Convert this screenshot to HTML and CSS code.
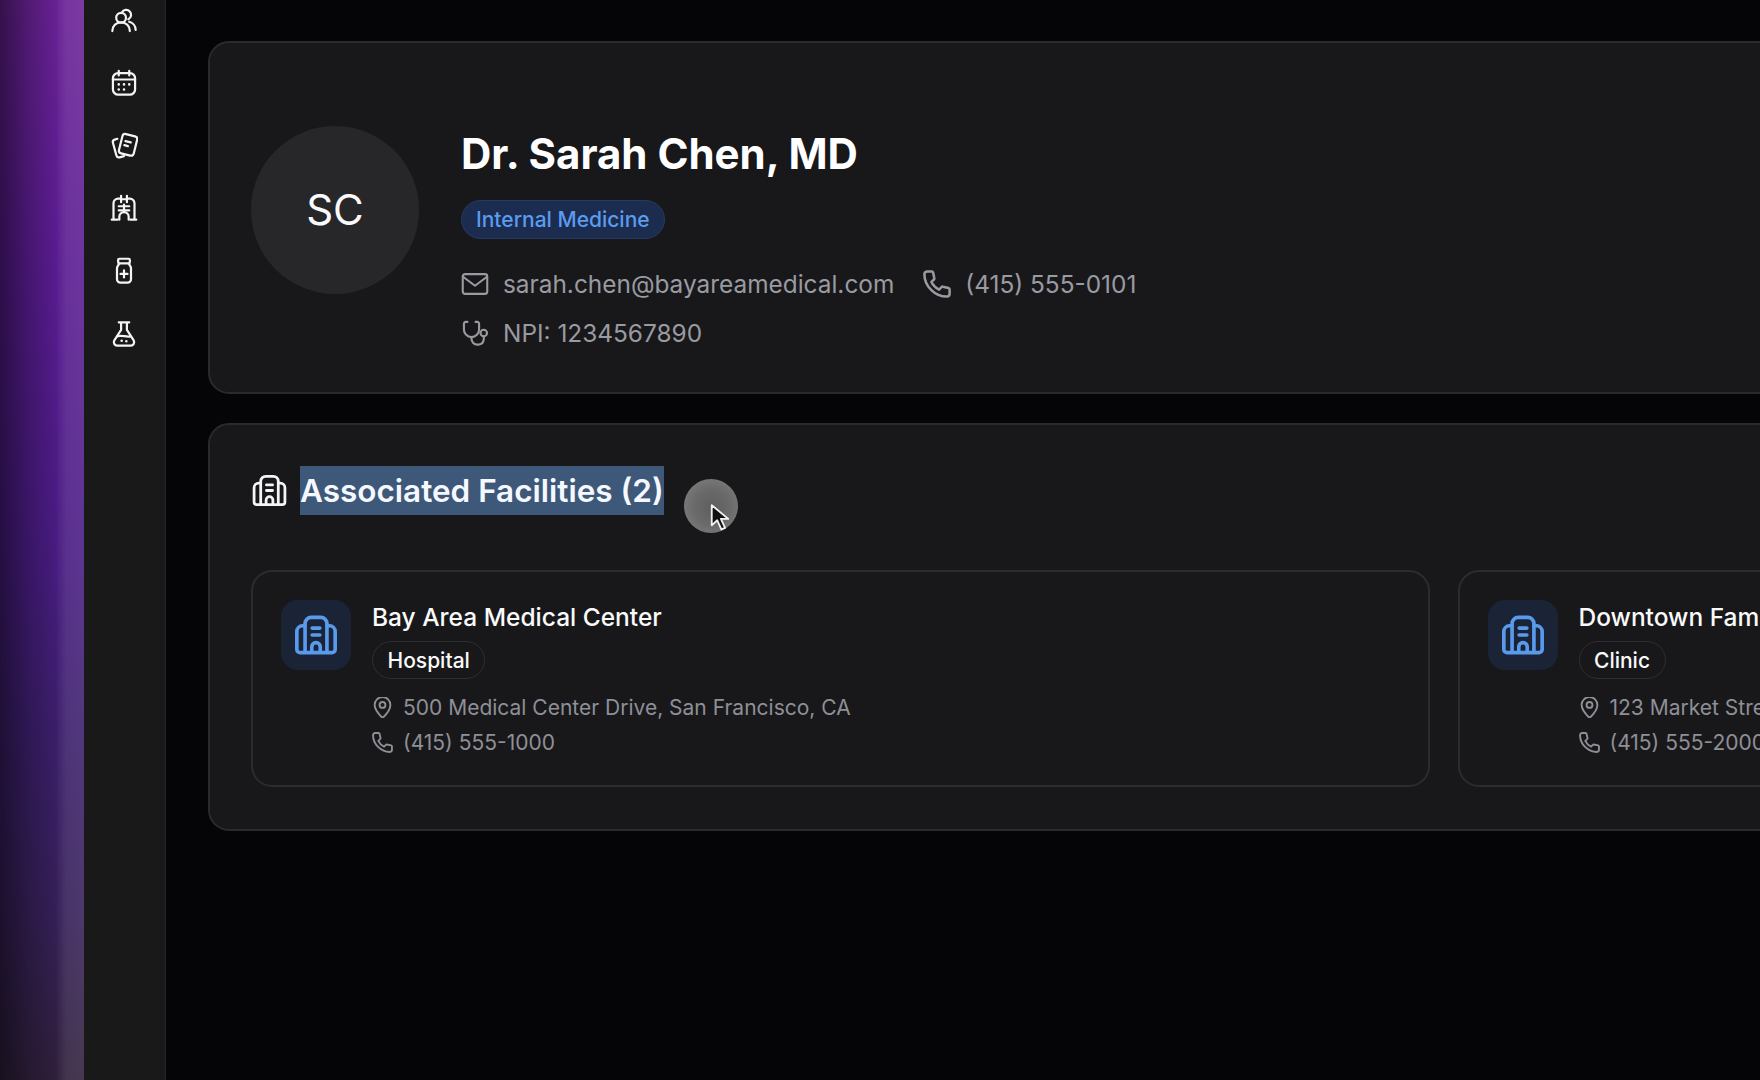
FILE: index.html
```html
<!DOCTYPE html>
<html lang="en">
<head>
<meta charset="utf-8">
<title>Dr. Sarah Chen</title>
<link rel="stylesheet" href="styles.css">
</head>
<body>
<svg class="defs" width="0" height="0" aria-hidden="true">
  <symbol id="i-building" viewBox="0 0 24 24">
    <path d="M6.300 21V6a3.200 3.200 0 0 1 3.200-3.200h5A3.200 3.200 0 0 1 17.700 6v15"/>
    <path d="M6.300 7.200H5a3 3 0 0 0-3 3v9.300A1.700 1.700 0 0 0 3.700 21.200h16.600a1.700 1.700 0 0 0 1.700-1.700v-9.300a3 3 0 0 0-3-3h-1.300"/>
    <path d="M10 8.400h4M10 12h4M9.800 21v-2.800a2.200 2.200 0 0 1 4.400 0V21"/>
  </symbol>
  <symbol id="i-phone" viewBox="2 2 20 20">
    <path d="M5 3h3.200a1 1 0 0 1 1 .8l.9 4a1 1 0 0 1-.3 1L8 10.500c1.200 2.500 3 4.300 5.500 5.500l1.700-1.800a1 1 0 0 1 1-.3l4 .9a1 1 0 0 1 .8 1V19a2 2 0 0 1-2 2C10.500 21 3 13.500 3 5a2 2 0 0 1 2-2z"/>
  </symbol>
  <symbol id="i-pin" viewBox="2 2 20 20">
    <path d="M12 22s-7.500-7.200-7.500-12.500a7.500 7.500 0 0 1 15 0C19.500 14.800 12 22 12 22z"/>
    <circle cx="12" cy="9.500" r="2.800"/>
  </symbol>
</svg>

<div class="app">
  <div class="edge"></div>
  <nav class="rail">
    <svg class="rail-icon" viewBox="0 0 24 24"><circle cx="9.500" cy="10" r="4.200"/><path d="M2 21.500c0-4.500 3.200-7.500 7.500-7.500s7.500 3 7.500 7.500"/><path d="M10.200 5.500a4.200 4.200 0 1 1 5.500 5.800"/><path d="M16.500 13.500c3 .8 5.500 3.500 5.500 7"/></svg>
    <svg class="rail-icon" viewBox="0 0 24 24"><rect x="2.500" y="3.500" width="19" height="18.500" rx="4.500"/><path d="M7.500 1.500v4M16.500 1.500v4M2.500 9h19"/><path class="dots" d="M7.500 13.200h.01M12 13.200h.01M16.500 13.200h.01M7.500 17.500h.01M12 17.500h.01"/></svg>
    <svg class="rail-icon" viewBox="0 0 24 24"><rect x="9" y="2.500" width="13" height="17" rx="2.500" transform="rotate(14 15.500 11)"/><path d="M13.200 7.800l4.600 1.100M12.300 11.300l3 .8"/><path d="M6.300 5.800L4 6.500a2.200 2.200 0 0 0-1.500 2.700l3 11a2.200 2.200 0 0 0 2.700 1.500l3.800-1"/></svg>
    <svg class="rail-icon" viewBox="0 0 24 24"><path d="M1.500 22h5M17.500 22h5M3 22V8a4 4 0 0 1 4-4h2.500M21 22V8a4 4 0 0 0-4-4h-2.500"/><path d="M9.500 1.500V7M14.500 1.500V7M9.500 4.500h5"/><path d="M7.500 10.500h9M7.500 14h9M12 9v6.500"/><path d="M8 22v-2.500a4 4 0 0 1 8 0V22"/></svg>
    <svg class="rail-icon" viewBox="0 0 24 24"><rect x="7" y="1.500" width="10" height="4" rx="1"/><path d="M8 5.500L6.500 8A3 3 0 0 0 6 9.500V19a3 3 0 0 0 3 3h6a3 3 0 0 0 3-3V9.500A3 3 0 0 0 17.500 8L16 5.500"/><path d="M12 11.500v6M9 14.500h6"/></svg>
    <svg class="rail-icon" viewBox="0 0 24 24"><path d="M7.500 2h9M9.500 2v6.500L3.700 17.500A3 3 0 0 0 6.200 22h11.600a3 3 0 0 0 2.500-4.500L14.500 8.500V2"/><path d="M6.500 14c3.500-1.500 7.500 1 11 0"/><path class="dots" d="M10 17.800h.01M14 18.200h.01"/></svg>
  </nav>

  <main class="main">
    <section class="card profile">
      <div class="avatar">SC</div>
      <div class="profile-body">
        <h1 class="name">Dr. Sarah Chen, MD</h1>
        <span class="specialty">Internal Medicine</span>
        <div class="contact-row contact-first">
          <span class="contact">
            <svg class="contact-icon" viewBox="0 0 24 24"><rect x="1.500" y="3.500" width="21" height="17" rx="2"/><path d="M2 6l10 7.500L22 6"/></svg>
            sarah.chen@bayareamedical.com
          </span>
          <span class="contact">
            <svg class="contact-icon"><use href="#i-phone"/></svg>
            (415) 555-0101
          </span>
        </div>
        <div class="contact-row">
          <span class="contact">
            <svg class="contact-icon" viewBox="0 0 24 24"><path d="M5.500 2.500H4A1.500 1.500 0 0 0 2.500 4v5a6.500 6.500 0 0 0 13 0V4A1.500 1.500 0 0 0 14 2.500h-1.500"/><path d="M9 15.500V17a5 5 0 0 0 5 5h1a5 5 0 0 0 4.500-4.500V15"/><circle cx="19.500" cy="12" r="2.800"/></svg>
            NPI: 1234567890
          </span>
        </div>
      </div>
    </section>

    <section class="card facilities">
      <header class="section-head">
        <svg class="section-icon"><use href="#i-building"/></svg>
        <h2 class="section-title"><span class="selected">Associated Facilities (2)</span></h2>
      </header>
      <div class="facility-grid">
        <article class="facility">
          <div class="facility-badge"><svg class="facility-icon"><use href="#i-building"/></svg></div>
          <div class="facility-body">
            <h3 class="facility-name">Bay Area Medical Center</h3>
            <span class="tag">Hospital</span>
            <div class="facility-lines">
              <span class="line"><svg class="line-icon"><use href="#i-pin"/></svg>500 Medical Center Drive, San Francisco, CA</span>
              <span class="line"><svg class="line-icon"><use href="#i-phone"/></svg>(415) 555-1000</span>
            </div>
          </div>
        </article>
        <article class="facility">
          <div class="facility-badge"><svg class="facility-icon"><use href="#i-building"/></svg></div>
          <div class="facility-body">
            <h3 class="facility-name">Downtown Family Clinic</h3>
            <span class="tag">Clinic</span>
            <div class="facility-lines">
              <span class="line"><svg class="line-icon"><use href="#i-pin"/></svg>123 Market Street, San Francisco, CA</span>
              <span class="line"><svg class="line-icon"><use href="#i-phone"/></svg>(415) 555-2000</span>
            </div>
          </div>
        </article>
      </div>
    </section>
  </main>
</div>

<div class="cursor-halo">
  <svg class="cursor-arrow" viewBox="0 0 24 32"><path d="M3 2v22l6-5.500 4.500 10 4-1.800-4.500-9.700h8z"/></svg>
</div>
</body>
</html>
```

FILE: styles.css
```css
* { box-sizing: border-box; }

html, body {
  margin: 0;
  height: 100%;
  overflow: hidden;
  background: #050507;
}

body {
  font-family: Inter, "Liberation Sans", sans-serif;
  color: #fff;
}

.defs { position: absolute; }

.app {
  display: flex;
  width: 1760px;
  height: 1080px;
  overflow: hidden;
}

.edge {
  flex: 0 0 84px;
  background:
    linear-gradient(90deg, rgba(255,255,255,0) 0, rgba(255,255,255,0) 56px, rgba(255,255,255,.09) 66px, rgba(255,255,255,.11) 84px),
    linear-gradient(90deg, rgba(0,0,0,.5) 0, rgba(0,0,0,.22) 30px, rgba(0,0,0,0) 60px),
    linear-gradient(180deg, #6a2296 0, #5a1c92 25%, #4a1c84 50%, #3c1f6c 68%, #362058 85%, #30203c 100%);
}

.rail {
  flex: 0 0 82px;
  display: flex;
  flex-direction: column;
  align-items: center;
  gap: 34.800px;
  padding: 6px 2px 0 0;
  background: #19191a;
  border-right: 1px solid #26262a;
}

.rail-icon {
  width: 28px;
  height: 28px;
  flex: none;
  fill: none;
  stroke: #f4f4f5;
  stroke-width: 1.900;
  stroke-linecap: round;
  stroke-linejoin: round;
}

.rail-icon .dots { stroke-width: 2.200; }

.main {
  flex: none;
  width: 2556px;
  padding: 41px 0 0 42px;
  display: flex;
  flex-direction: column;
  align-items: flex-start;
  gap: 29px;
}

.card {
  width: 2472px;
  background: #18181b;
  border: 2px solid #2a2a2e;
  border-radius: 21px;
}

.profile {
  height: 353px;
  padding: 83px 41px 0;
  display: flex;
  align-items: flex-start;
  gap: 42px;
}

.avatar {
  flex: none;
  width: 168px;
  height: 168px;
  border-radius: 50%;
  background: #27272a;
  display: flex;
  align-items: center;
  justify-content: center;
  font-size: 42px;
  line-height: 1;
  color: #fafafa;
}

.profile-body {
  display: flex;
  flex-direction: column;
  align-items: flex-start;
}

.name {
  margin: 0;
  font-size: 42px;
  line-height: 56px;
  font-weight: 700;
  color: #fff;
}

.specialty {
  margin-top: 18px;
  height: 39px;
  padding: 0 14px;
  display: flex;
  align-items: center;
  font-size: 21px;
  font-weight: 500;
  color: #5b9bf0;
  background: #1b2c4e;
  border: 1px solid #263a60;
  border-radius: 20px;
}

.contact-row {
  display: flex;
  gap: 29px;
  height: 49px;
  align-items: center;
}

.contact-first { margin-top: 20px; }

.contact {
  display: flex;
  align-items: center;
  gap: 14px;
  font-size: 24.400px;
  color: #9a9aa1;
  white-space: nowrap;
}

.contact-icon {
  width: 28px;
  height: 28px;
  flex: none;
  fill: none;
  stroke: #9a9aa1;
  stroke-width: 1.800;
  stroke-linecap: round;
  stroke-linejoin: round;
}

.facilities {
  height: 408px;
  padding: 41px 41px 0;
}

.section-head {
  display: flex;
  align-items: center;
  gap: 12px;
  height: 49px;
}

.section-icon {
  width: 37px;
  height: 37px;
  flex: none;
  fill: none;
  stroke: #f4f4f5;
  stroke-width: 1.800;
  stroke-linecap: round;
  stroke-linejoin: round;
}

.section-title {
  margin: 0;
  font-size: 31.500px;
  font-weight: 600;
  line-height: 49px;
}

.selected {
  display: block;
  background: #3d5878;
  color: #f5f9ff;
  height: 49px;
}

.facility-grid {
  display: grid;
  grid-template-columns: 1179px 1179px;
  gap: 27.500px;
  margin-top: 55px;
}

.facility {
  height: 217px;
  padding: 28px 28px 0;
  display: flex;
  gap: 21px;
  border: 2px solid #2c2c30;
  border-radius: 21px;
}

.facility-badge {
  flex: none;
  width: 70px;
  height: 70px;
  border-radius: 17px;
  background: #1a2436;
  display: flex;
  align-items: center;
  justify-content: center;
}

.facility-icon {
  width: 46px;
  height: 46px;
  fill: none;
  stroke: #5a9aec;
  stroke-width: 1.900;
  stroke-linecap: round;
  stroke-linejoin: round;
}

.facility-body {
  display: flex;
  flex-direction: column;
  align-items: flex-start;
}

.facility-name {
  flex: none;
  margin: 0;
  font-size: 24.500px;
  line-height: 35px;
  font-weight: 500;
  color: #fafafa;
  white-space: nowrap;
}

.tag {
  flex: none;
  margin-top: 6px;
  height: 38px;
  padding: 0 14.500px;
  display: flex;
  align-items: center;
  font-size: 21px;
  font-weight: 500;
  color: #fafafa;
  border: 1px solid #2e2e32;
  border-radius: 19px;
}

.facility-lines {
  flex: none;
  margin-top: 11px;
  display: flex;
  flex-direction: column;
}

.line {
  display: flex;
  align-items: center;
  gap: 10px;
  height: 35px;
  font-size: 21px;
  color: #8f8f96;
  white-space: nowrap;
}

.line-icon {
  width: 21px;
  height: 21px;
  flex: none;
  fill: none;
  stroke: #8f8f96;
  stroke-width: 1.800;
  stroke-linecap: round;
  stroke-linejoin: round;
}

.cursor-halo {
  position: absolute;
  left: 684px;
  top: 479px;
  width: 54px;
  height: 54px;
  border-radius: 50%;
  background: radial-gradient(circle at 52% 52%, #5e5e60 0, #6a6a6b 45%, #858586 100%);
}

.cursor-arrow {
  position: absolute;
  left: 25px;
  top: 24px;
  width: 22px;
  height: 30px;
  fill: #111;
  stroke: #f2f2f2;
  stroke-width: 2;
  stroke-linejoin: round;
}
```
